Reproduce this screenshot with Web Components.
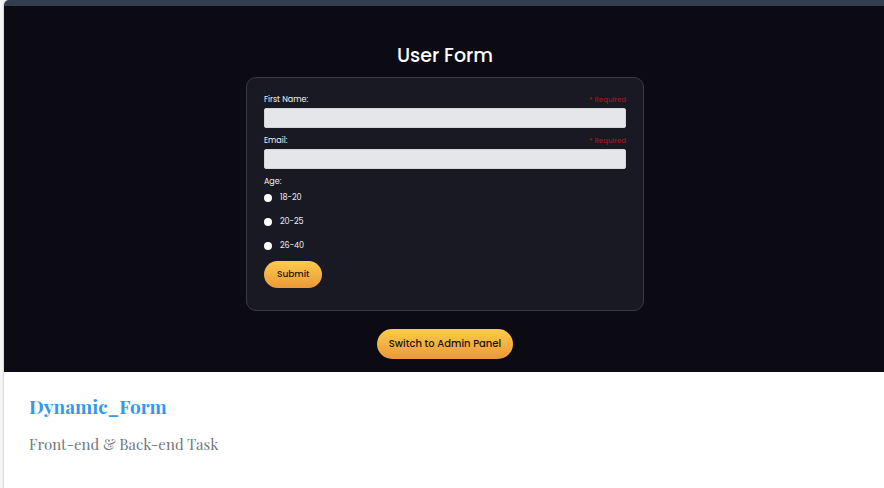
<!DOCTYPE html>
<html lang="en">
<head>
<meta charset="utf-8">
<title>Dynamic_Form</title>
<style>
body { margin: 0; background: #f5f5f5; font-family: Poppins, Inter, "Open Sans", sans-serif; }
</style>
</head>
<body>
<project-card>
  <user-form slot="preview"></user-form>
  <a slot="title" href="#project">Dynamic_Form</a>
  <span slot="summary">Front-end &amp; Back-end Task</span>
</project-card>
<script>
const define = (name, html) => customElements.define(name, class extends HTMLElement {
  constructor() {
    super();
    this.attachShadow({ mode: "open" }).innerHTML = html;
  }
});

customElements.define("text-field", class extends HTMLElement {
  connectedCallback() {
    if (this.shadowRoot) return;
    this.attachShadow({ mode: "open" }).innerHTML = `
      <style>
        :host { display: block; }
        .row { display: flex; justify-content: space-between; line-height: 12px; margin-bottom: 2px; }
        label { font-size: 8px; color: #f1f1f3; }
        .required { font-size: 7px; line-height: 12px; font-weight: 500; color: #a3161c; }
        input { display: block; box-sizing: border-box; width: 100%; height: 20px; margin: 0; padding: 0 6px;
          border: 1px solid #d4d5d9; border-radius: 2px; background: #e5e6ea; font: inherit; font-size: 8px; }
      </style>
      <div class="row"><label for="field"></label><span class="required">* Required</span></div>
      <input id="field" required>`;
    this.shadowRoot.querySelector("label").textContent = this.getAttribute("label");
    this.shadowRoot.querySelector("input").type = this.getAttribute("type") || "text";
  }
});

define("age-choice", `
  <style>
    :host { display: block; color: #f1f1f3; font-size: 8px; line-height: 12px; }
    fieldset { margin: 0; padding: 0; border: 0; display: grid; gap: 12px; }
    legend { padding: 0; margin-bottom: 4px; }
    label { display: flex; align-items: center; gap: 8px; }
    input { appearance: none; width: 8px; height: 8px; margin: 0; border-radius: 50%; background: #fff; }
  </style>
  <fieldset>
    <legend>Age:</legend>
    <label><input type="radio" name="age">18-20</label>
    <label><input type="radio" name="age">20-25</label>
    <label><input type="radio" name="age">26-40</label>
  </fieldset>`);

define("pill-button", `
  <style>
    :host { display: inline-flex; }
    button { padding: var(--pill-padding, 6px 13px); border: 0; border-radius: 15px; color: #15130f;
      background: linear-gradient(#fbcc4b, #eb983a); font: inherit; font-weight: 500;
      font-size: var(--pill-size, 9px); line-height: 15px; white-space: nowrap; }
  </style>
  <button type="button"><slot></slot></button>`);

define("user-form", `
  <style>
    :host { display: flex; flex-direction: column; align-items: center; padding: 36px 0 13px 2px; background: #0c0a13; }
    h1 { margin: 0 0 8px; color: #fff; font-size: 19px; line-height: 27px; font-weight: 500; }
    form { box-sizing: border-box; width: calc(45% + 3px); min-width: 260px; display: flex; flex-direction: column; gap: 7px;
      padding: 16px 17px 22px; border: 1px solid #3b3a42; border-radius: 10px; background: #191923; }
    .submit { align-self: flex-start; margin-top: 2px; --pill-padding: 6px 13px; }
    .switch { margin-top: 18px; --pill-size: 10px; --pill-padding: 7px 12px 8px; }
  </style>
  <h1>User Form</h1>
  <form>
    <text-field label="First Name:"></text-field>
    <text-field label="Email:" type="email"></text-field>
    <age-choice></age-choice>
    <pill-button class="submit">Submit</pill-button>
  </form>
  <pill-button class="switch">Switch to Admin Panel</pill-button>`);

define("project-card", `
  <style>
    :host { display: block; box-sizing: border-box; min-height: 100vh; margin-left: 4px; overflow: hidden;
      border-radius: 5px 0 0 0; background: #fff; box-shadow: 0 0 2px rgba(0, 0, 0, .4); }
    .bar { height: 6px; background: #323e4e; }
    .info { padding: 20px 25px; font-family: "Playfair Display", "Liberation Serif", serif; }
    h2 { margin: 0 0 12px; font-size: 19px; line-height: 28px; font-weight: 700; }
    p { margin: 0; font-size: 15px; line-height: 24px; color: #6f7780; }
    ::slotted(a) { color: #3298f0; text-decoration: none; }
  </style>
  <div class="bar"></div>
  <slot name="preview"></slot>
  <div class="info">
    <h2><slot name="title"></slot></h2>
    <p><slot name="summary"></slot></p>
  </div>`);
</script>
</body>
</html>
